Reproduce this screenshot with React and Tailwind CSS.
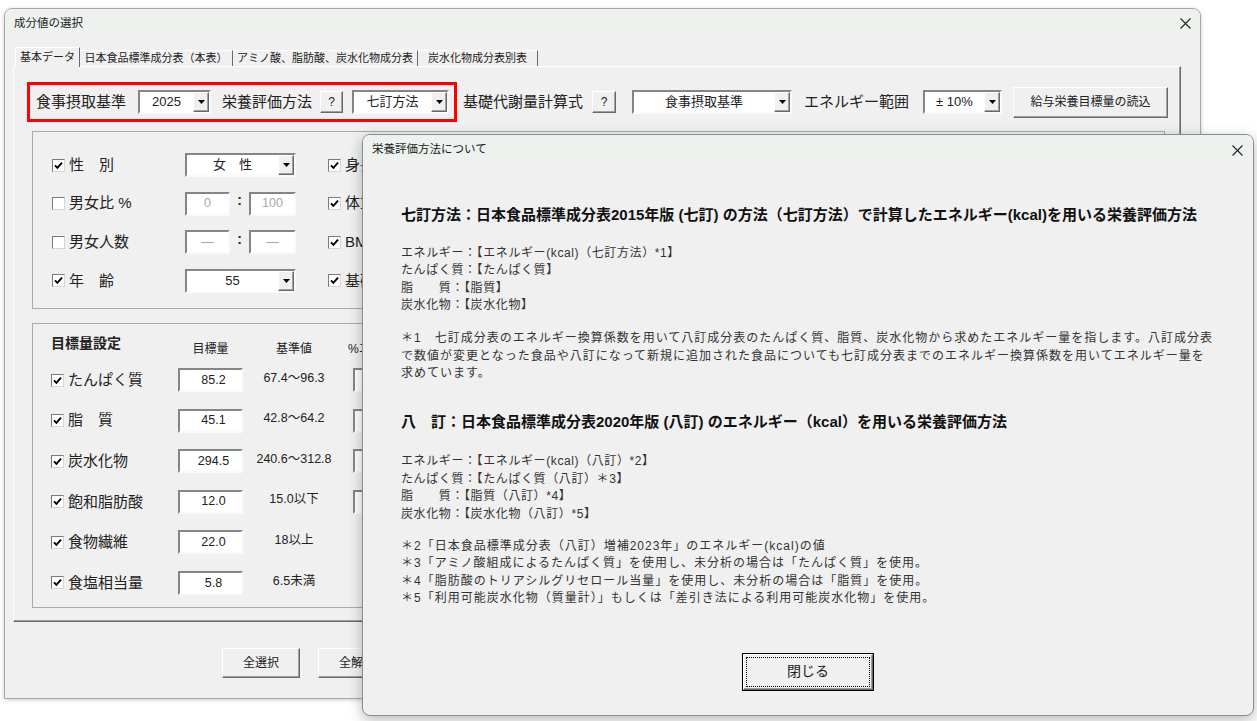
import React from "react";

/* ── small Win32-style controls ─────────────────────────── */

function CloseX() {
  return (
    <svg width="11" height="11" viewBox="0 0 11 11" className="shrink-0">
      <path d="M0.5 0.5 L10.5 10.5 M10.5 0.5 L0.5 10.5" stroke="#222" strokeWidth="1.1" />
    </svg>
  );
}

function Check({ checked }) {
  return (
    <span className="flex h-[13px] w-[13px] shrink-0 items-center justify-center border border-t-[#7a7a7a] border-l-[#7a7a7a] border-r-[#d6d6d6] border-b-[#d6d6d6] bg-white">
      {checked && (
        <svg width="9" height="9" viewBox="0 0 9 9">
          <path d="M1 4.3 L3.4 6.8 L8 1.6" fill="none" stroke="#000" strokeWidth="1.9" />
        </svg>
      )}
    </span>
  );
}

function DropBtn() {
  return (
    <span className="flex w-[16px] shrink-0 items-center justify-center border border-t-white border-l-white border-r-[#696969] border-b-[#696969] bg-[#f0f0f0] shadow-[inset_-1px_-1px_0_#a0a0a0]">
      <svg width="7" height="4" viewBox="0 0 7 4">
        <polygon points="0,0 7,0 3.5,4" fill="#000" />
      </svg>
    </span>
  );
}

function Combo({ value, className }) {
  return (
    <div className={`flex h-[24px] shrink-0 items-stretch border-2 border-t-[#858585] border-l-[#858585] border-r-[#fafafa] border-b-[#fafafa] bg-white ${className}`}>
      <span className="flex flex-1 items-center justify-center whitespace-nowrap text-[13px] text-[#222]">{value}</span>
      <DropBtn />
    </div>
  );
}

function TextBox({ value, className, dim }) {
  return (
    <div
      className={`flex h-[24px] shrink-0 items-center justify-center border-2 border-t-[#858585] border-l-[#858585] border-r-[#fafafa] border-b-[#fafafa] bg-white text-[12.5px] ${
        dim ? "text-[#a8a8a8]" : "text-[#222]"
      } ${className}`}
    >
      {value}
    </div>
  );
}

function Raised({ children, className }) {
  return (
    <div className={`flex shrink-0 items-center justify-center border border-t-white border-l-white border-r-[#696969] border-b-[#696969] bg-[#f0f0f0] shadow-[inset_-1px_-1px_0_#a0a0a0] text-[#222] ${className}`}>
      {children}
    </div>
  );
}

/* ── main window: 成分値の選択 ─────────────────────────── */

const PERSON_ROWS = [
  { label: "性　別", checked: true, kind: "combo", value: "女　性", right: "身長" },
  { label: "男女比 %", checked: false, kind: "pair", a: "0", b: "100", right: "体重" },
  { label: "男女人数", checked: false, kind: "pair", a: "—", b: "—", right: "BMI" },
  { label: "年　齢", checked: true, kind: "combo", value: "55", right: "基礎" },
];

const TARGET_ROWS = [
  { label: "たんぱく質", value: "85.2", ref: "67.4～96.3", pct: true },
  { label: "脂　質", value: "45.1", ref: "42.8～64.2", pct: true },
  { label: "炭水化物", value: "294.5", ref: "240.6～312.8", pct: true },
  { label: "飽和脂肪酸", value: "12.0", ref: "15.0以下", pct: true },
  { label: "食物繊維", value: "22.0", ref: "18以上" },
  { label: "食塩相当量", value: "5.8", ref: "6.5未満" },
];

function Tabs() {
  return (
    <div className="flex h-[19px] items-end pl-[2px] text-[11px] text-[#222]">
      <div className="relative z-10 -mb-[1px] flex h-[20px] w-[65px] items-center justify-center border border-b-0 border-t-white border-l-white border-r-[#696969] bg-[#f0f0f0]">
        基本データ
      </div>
      <div className="flex h-[16px] w-[153px] items-center justify-center border-r border-t border-t-white border-r-[#696969]">
        日本食品標準成分表（本表）
      </div>
      <div className="flex h-[16px] w-[185px] items-center justify-center border-r border-t border-t-white border-r-[#696969]">
        アミノ酸、脂肪酸、炭水化物成分表
      </div>
      <div className="flex h-[16px] w-[120px] items-center justify-center border-r border-t border-t-white border-r-[#696969]">
        炭水化物成分表別表
      </div>
    </div>
  );
}

function TopRow() {
  return (
    <div className="ml-[13px] mt-[15px] flex items-center text-[15px] text-[#222]">
      <div className="flex h-[40px] items-center border-[3px] border-[#ff0000] pl-[6px] pr-[5px]">
        <span className="w-[90px] whitespace-nowrap">食事摂取基準</span>
        <Combo value="2025" className="ml-[12px] w-[73px]" />
        <span className="ml-[11px] w-[90px] whitespace-nowrap">栄養評価方法</span>
        <Raised className="ml-[8px] h-[22px] w-[23px] text-[12px]">?</Raised>
        <Combo value="七訂方法" className="ml-[9px] w-[97px]" />
      </div>
      <span className="ml-[6px] w-[120px] whitespace-nowrap">基礎代謝量計算式</span>
      <Raised className="ml-[9px] h-[22px] w-[24px] text-[12px]">?</Raised>
      <Combo value="食事摂取基準" className="ml-[16px] w-[160px]" />
      <span className="ml-[12px] w-[104px] whitespace-nowrap">エネルギー範囲</span>
      <Combo value="± 10%" className="ml-[15px] w-[79px]" />
      <Raised className="ml-[11px] h-[31px] w-[155px] text-[12px]">給与栄養目標量の読込</Raised>
    </div>
  );
}

function PersonGroup() {
  return (
    <div className="ml-[18px] mt-[9px] flex h-[178px] w-[1133px] flex-col gap-[14.67px] border border-[#a9a9a9] pl-[19px] pt-[21px] text-[15px] text-[#222]">
      {PERSON_ROWS.map((r) => (
        <div key={r.label} className="flex h-[24px] items-center">
          <div className="flex w-[133px] items-center gap-[4px]">
            <Check checked={r.checked} />
            <span className="whitespace-nowrap">{r.label}</span>
          </div>
          {r.kind === "combo" ? (
            <Combo value={r.value} className="w-[111px]" />
          ) : (
            <div className="flex w-[111px] items-center">
              <TextBox value={r.a} dim className="w-[45px]" />
              <span className="w-[19px] -translate-y-[3px] text-center text-[14px] font-bold">:</span>
              <TextBox value={r.b} dim className="w-[47px]" />
            </div>
          )}
          <div className="ml-[32px] flex items-center gap-[4px]">
            <Check checked />
            <span className="whitespace-nowrap">{r.right}</span>
          </div>
        </div>
      ))}
    </div>
  );
}

function TargetGroup() {
  return (
    <div className="ml-[18px] mt-[14px] flex h-[285px] w-[1133px] flex-col border border-[#a9a9a9] pl-[18px] pt-[9px] text-[#222]">
      <div className="flex h-[24px] items-start">
        <span className="w-[127px] text-[14px] font-bold leading-[20px]">目標量設定</span>
        <span className="w-[65px] pt-[6px] text-center text-[12px] leading-[20px]">目標量</span>
        <span className="ml-[10px] w-[82px] pt-[6px] text-center text-[12px] leading-[20px]">基準値</span>
        <span className="ml-[13px] pt-[6px] text-[12px] leading-[20px]">%エネ</span>
      </div>
      <div className="mt-[11px] flex flex-col gap-[16.6px]">
        {TARGET_ROWS.map((r) => (
          <div key={r.label} className="flex h-[24px] items-center">
            <div className="flex w-[127px] items-center gap-[4px] text-[15px]">
              <Check checked />
              <span className="whitespace-nowrap">{r.label}</span>
            </div>
            <TextBox value={r.value} className="w-[65px] pl-[6px]" />
            <span className="ml-[10px] w-[82px] -translate-y-[2px] text-center text-[12.5px] whitespace-nowrap">{r.ref}</span>
            {r.pct && <TextBox value="" className="ml-[18px] w-[60px]" />}
          </div>
        ))}
      </div>
    </div>
  );
}

function MainWindow() {
  return (
    <div className="ml-[4px] mt-[8px] flex h-[691px] w-[1197px] flex-col overflow-hidden rounded-t-[8px] border border-[#a8a8a8] bg-[#f0f0f0] shadow-[0_1px_4px_rgba(0,0,0,0.2)]">
      <div className="flex h-[29px] shrink-0 items-center justify-between bg-[#edf2ee] pl-[9px] pr-[9px]">
        <span className="text-[11.5px] text-[#1a1a1a]">成分値の選択</span>
        <CloseX />
      </div>
      <div className="flex flex-1 flex-col pl-[8px] pt-[9px]">
        <Tabs />
        {/* tab page */}
        <div className="flex h-[556px] w-[1168px] flex-col border border-t-white border-l-white border-r-[#696969] border-b-[#696969] shadow-[inset_-1px_-1px_0_#a0a0a0]">
          <TopRow />
          <PersonGroup />
          <TargetGroup />
        </div>
        <div className="ml-[209px] mt-[26px] flex gap-[18px] text-[12px]">
          <Raised className="h-[30px] w-[78px]">全選択</Raised>
          <Raised className="h-[30px] w-[78px]">全解除</Raised>
        </div>
      </div>
    </div>
  );
}

/* ── floating dialog: 栄養評価方法について ───────────────── */

function EvalDialog() {
  return (
    <div className="absolute left-[362px] top-[134px] flex h-[582px] w-[892px] flex-col overflow-hidden rounded-[8px] border border-[#8c8c8c] bg-[#f0f0f0] shadow-[0_4px_14px_rgba(0,0,0,0.28)]">
      <div className="flex h-[30px] shrink-0 items-center justify-between bg-[#edf2ee] pl-[9px] pr-[10px]">
        <span className="text-[11.5px] text-[#1a1a1a]">栄養評価方法について</span>
        <CloseX />
      </div>

      <div className="flex flex-col whitespace-nowrap pl-[38px] text-[#333]">
        <h2 className="mt-[40px] text-[15px] font-bold leading-[20px] text-[#111]">
          七訂方法：日本食品標準成分表2015年版 (七訂) の方法（七訂方法）で計算したエネルギー(kcal)を用いる栄養評価方法
        </h2>
        <div className="mt-[19.5px] text-[12px] leading-[17.5px] tracking-[0.6px]">
          <p>エネルギー：【エネルギー(kcal)（七訂方法）*1】</p>
          <p>たんぱく質：【たんぱく質】</p>
          <p>脂　　質：【脂質】</p>
          <p>炭水化物：【炭水化物】</p>
        </div>
        <div className="mt-[15.5px] text-[12px] leading-[17.5px] tracking-[1px]">
          <p>＊1　七訂成分表のエネルギー換算係数を用いて八訂成分表のたんぱく質、脂質、炭水化物から求めたエネルギー量を指します。八訂成分表</p>
          <p>で数値が変更となった食品や八訂になって新規に追加された食品についても七訂成分表までのエネルギー換算係数を用いてエネルギー量を</p>
          <p>求めています。</p>
        </div>

        <h2 className="mt-[29.5px] text-[15px] font-bold leading-[20px] text-[#111]">
          八　訂：日本食品標準成分表2020年版 (八訂) のエネルギー（kcal）を用いる栄養評価方法
        </h2>
        <div className="mt-[21px] text-[12px] leading-[17.5px] tracking-[0.6px]">
          <p>エネルギー：【エネルギー(kcal)（八訂）*2】</p>
          <p>たんぱく質：【たんぱく質（八訂）＊3】</p>
          <p>脂　　質：【脂質（八訂）*4】</p>
          <p>炭水化物：【炭水化物（八訂）*5】</p>
        </div>
        <div className="mt-[14.5px] text-[12px] leading-[17.5px] tracking-[1px]">
          <p>＊2「日本食品標準成分表（八訂）増補2023年」のエネルギー(kcal)の値</p>
          <p>＊3「アミノ酸組成によるたんぱく質」を使用し、未分析の場合は「たんぱく質」を使用。</p>
          <p>＊4「脂肪酸のトリアシルグリセロール当量」を使用し、未分析の場合は「脂質」を使用。</p>
          <p>＊5「利用可能炭水化物（質量計）」もしくは「差引き法による利用可能炭水化物」を使用。</p>
        </div>
      </div>

      <div className="mt-[45px] flex justify-center">
        <div className="h-[38px] w-[132px] border border-black bg-[#f0f0f0]">
          <div className="flex h-full w-full items-center justify-center border border-t-white border-l-white border-r-[#696969] border-b-[#696969] p-[2px] shadow-[inset_-1px_-1px_0_#a0a0a0]">
            <div className="flex h-full w-full items-center justify-center border border-dotted border-black text-[14px] text-[#222]">
              閉じる
            </div>
          </div>
        </div>
      </div>
    </div>
  );
}

export default function App() {
  return (
    <div className="relative h-[721px] w-[1257px] overflow-hidden bg-white font-['Liberation_Sans','Noto_Sans_CJK_JP',sans-serif]">
      <MainWindow />
      <EvalDialog />
    </div>
  );
}
